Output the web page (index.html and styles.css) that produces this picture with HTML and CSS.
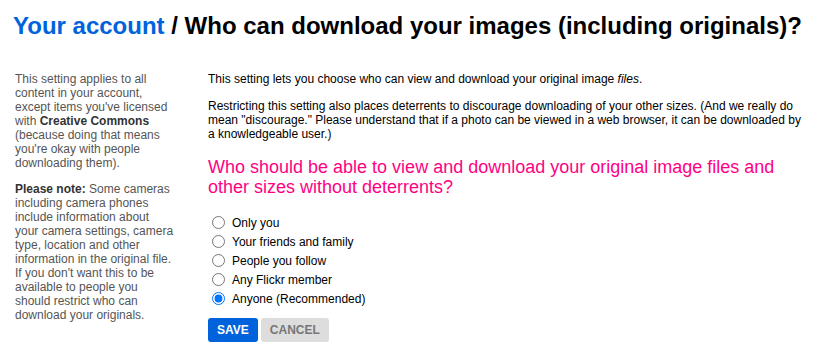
FILE: index.html
```html
<!DOCTYPE html>
<html lang="en">
<head>
  <meta charset="UTF-8" />
  <title>Who can download your images?</title>
  <link rel="stylesheet" href="styles.css">
</head>
<body>

<h1 class="page-title"><a href="#">Your account</a> / Who can download your images (including originals)?</h1>

<div class="layout">
  <aside class="sidebar">
    <p>This setting applies to all content in your account, except items you've licensed with <b>Creative Commons</b> (because doing that means you're okay with people downloading them).</p>
    <p><b>Please note:</b> Some cameras including camera phones include information about your camera settings, camera type, location and other information in the original file. If you don't want this to be available to people you should restrict who can download your originals.</p>
  </aside>

  <form class="main">
    <p>This setting lets you choose who can view and download your original image <i>files</i>.</p>
    <p>Restricting this setting also places deterrents to discourage downloading of your other sizes. (And we really do mean "discourage." Please understand that if a photo can be viewed in a web browser, it can be downloaded by a knowledgeable user.)</p>

    <h2 class="question">Who should be able to view and download your original image files and other sizes without deterrents?</h2>

    <ul class="choices">
      <li><label><input type="radio" name="who"> Only you</label></li>
      <li><label><input type="radio" name="who"> Your friends and family</label></li>
      <li><label><input type="radio" name="who"> People you follow</label></li>
      <li><label><input type="radio" name="who"> Any Flickr member</label></li>
      <li><label><input type="radio" name="who" checked> Anyone (Recommended)</label></li>
    </ul>

    <div class="buttons">
      <button type="button" class="btn btn-save">SAVE</button>
      <button type="button" class="btn btn-cancel">CANCEL</button>
    </div>
  </form>
</div>

</body>
</html>
```

FILE: styles.css
```css
* {
  box-sizing: border-box;
}

body {
  margin: 0;
  font-family: "Liberation Sans", Arial, sans-serif;
  background: #fff;
  color: #000;
}

.page-title {
  margin: 0;
  padding: 10px 0 0 13px;
  font-size: 24px;
  line-height: 32px;
  font-weight: bold;
  color: #000;
  white-space: nowrap;
}

.page-title a {
  color: #0063dc;
  text-decoration: none;
}

.layout {
  display: flex;
  padding-top: 30px;
}

.sidebar {
  flex: none;
  width: 175px;
  padding-left: 15px;
  font-size: 12px;
  line-height: 14px;
  color: #555;
}

.sidebar p {
  margin: 0 0 12px;
}

.sidebar b {
  color: #333;
}

.main {
  flex: 1;
  padding-left: 33px;
  padding-right: 20px;
  font-size: 12px;
  line-height: 14px;
  color: #000;
}

.main p {
  margin: 0 0 13px;
}

.question {
  margin: 16px 0 16px;
  font-size: 18px;
  line-height: 20px;
  font-weight: normal;
  color: #ff0084;
}

.choices {
  list-style: none;
  margin: 0;
  padding: 0;
}

.choices li {
  height: 19px;
  display: flex;
  align-items: center;
}

.choices label {
  display: flex;
  align-items: center;
  gap: 7px;
}

.choices input {
  margin: 0 0 0 4px;
  width: 13px;
  height: 13px;
}

.buttons {
  display: flex;
  gap: 3px;
  margin-top: 10px;
}

.btn {
  border: none;
  border-radius: 3px;
  height: 24px;
  padding: 0 9px;
  font-family: inherit;
  font-size: 12px;
  font-weight: bold;
  cursor: pointer;
}

.btn-save {
  background: #0063dc;
  color: #fff;
}

.btn-cancel {
  background: #ddd;
  color: #777;
}
```
